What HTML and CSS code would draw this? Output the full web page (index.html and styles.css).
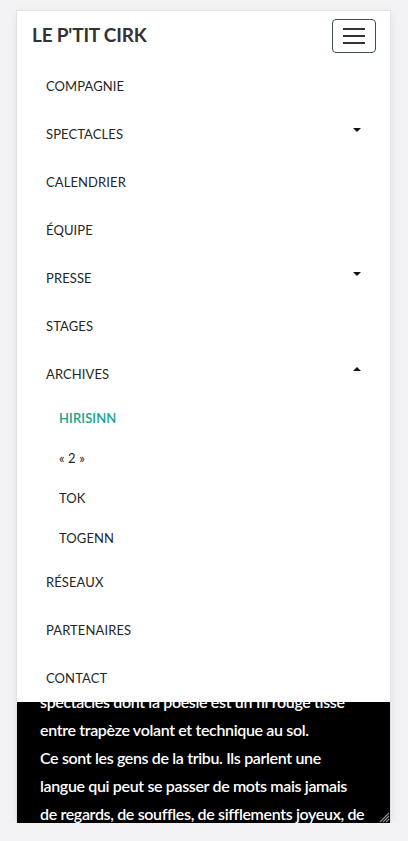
FILE: index.html
```html
<!DOCTYPE html>
<html lang="fr">
<head>
<meta charset="utf-8">
<title>Le P'tit Cirk</title>
<link rel="stylesheet" href="styles.css">
</head>
<body>
<div class="card">
  <header class="bar">
    <div class="brand">LE P'TIT CIRK</div>
    <button class="toggler" aria-label="menu"><span></span><span></span><span></span></button>
  </header>
  <nav class="menu">
    <ul class="list">
      <li class="item">COMPAGNIE</li>
      <li class="item">SPECTACLES<span class="caret down"></span></li>
      <li class="item">CALENDRIER</li>
      <li class="item">ÉQUIPE</li>
      <li class="item">PRESSE<span class="caret down"></span></li>
      <li class="item">STAGES</li>
      <li class="item">ARCHIVES<span class="caret up"></span></li>
      <li class="sub active">HIRISINN</li>
      <li class="sub">« 2 »</li>
      <li class="sub">TOK</li>
      <li class="sub">TOGENN</li>
      <li class="item">RÉSEAUX</li>
      <li class="item">PARTENAIRES</li>
      <li class="item">CONTACT</li>
    </ul>
  </nav>
  <section class="content">
    <p class="text">spectacles dont la poésie est un fil rouge tissé<br>entre trapèze volant et technique au sol.<br>Ce sont les gens de la tribu. Ils parlent une<br>langue qui peut se passer de mots mais jamais<br>de regards, de souffles, de sifflements joyeux, de</p>
    <svg class="grip" width="12" height="12" viewBox="0 0 12 12"><path d="M11 2 L2 11 M11 5 L5 11 M11 8 L8 11" stroke="#8a8a8a" stroke-width="1.2"/></svg>
  </section>
</div>
</body>
</html>
```
FILE: styles.css
```css
html, body { margin: 0; padding: 0; }
body {
  background: #f3f3f5;
  font-family: "Source Sans Pro", Lato, "Noto Sans", sans-serif;
  padding-top: 10px;
}
.card {
  margin-left: 16px;
  width: 375px;
  height: 813px;
  box-sizing: border-box;
  background: #fff;
  border: 1px solid #e2e2e4;
  border-bottom: 0;
  box-shadow: 0 3px 10px rgba(0,0,0,0.07);
  display: flex;
  flex-direction: column;
  overflow: hidden;
}
.bar {
  height: 51px;
  display: flex;
  align-items: center;
  justify-content: space-between;
  padding: 0 14px 0 15px;
}
.brand {
  font-size: 19px;
  font-weight: 700;
  color: #333;
  letter-spacing: -0.2px;
  padding-bottom: 4px;
}
.toggler {
  width: 44px;
  height: 34px;
  box-sizing: border-box;
  border: 1px solid #3e5159;
  border-radius: 4px;
  background: #fff;
  display: flex;
  flex-direction: column;
  justify-content: center;
  align-items: center;
  gap: 5px;
  padding: 0;
  margin-top: -1px;
}
.toggler span {
  display: block;
  width: 22px;
  height: 2px;
  background: #333;
}
.list { list-style: none; margin: 0; padding: 0; }
.item, .sub {
  display: flex;
  align-items: center;
  justify-content: space-between;
  font-size: 13px;
  color: #262626;
  letter-spacing: 0.1px;
}
.item { height: 48px; padding: 0 29px 0 29px; }
.sub { height: 40px; padding: 0 29px 0 42px; }
.sub.active { color: #18a08c; font-weight: 600; }
.caret {
  width: 0; height: 0;
  border-left: 4.5px solid transparent;
  border-right: 4.5px solid transparent;
  margin-top: -9px;
}
.caret.down { border-top: 4px solid #111; }
.caret.up { border-bottom: 4px solid #111; margin-top: -11px; }
.content {
  flex: 1;
  background: #000;
  overflow: hidden;
  position: relative;
  padding: 0 23px;
}
.text {
  margin: -14px 0 0 0;
  color: #fff;
  font-size: 16px;
  letter-spacing: -0.35px;
  line-height: 28px;
  font-weight: 600;
  white-space: nowrap;
}
.grip { position: absolute; right: 0; bottom: 0; }
```
